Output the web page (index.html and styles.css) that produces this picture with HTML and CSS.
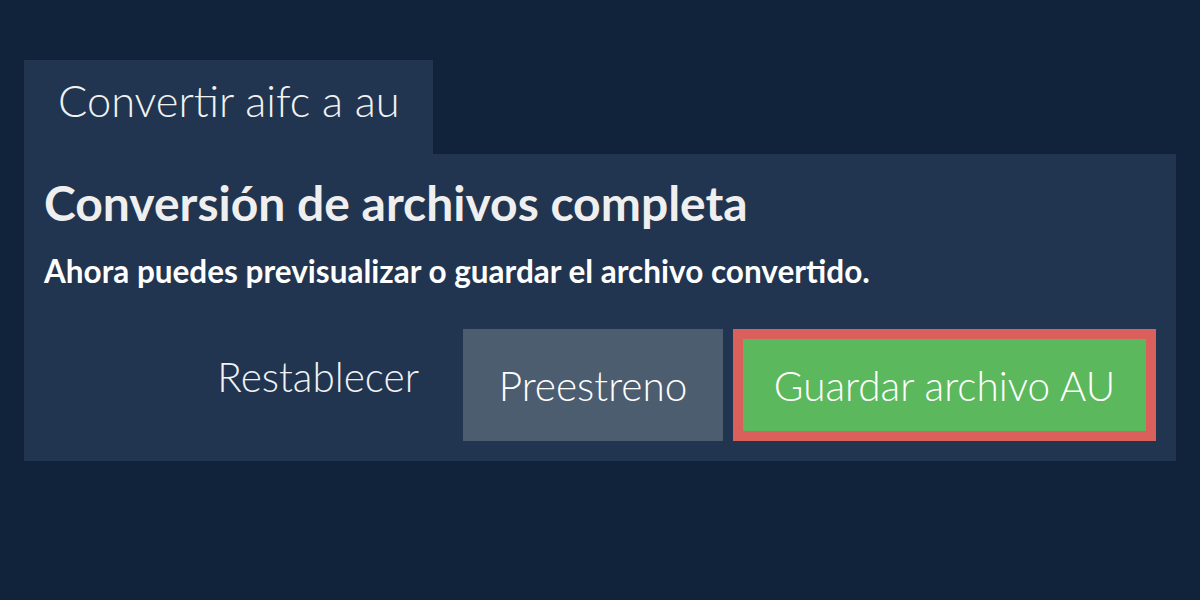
FILE: index.html
```html
<!DOCTYPE html>
<html lang="es">
<head>
<meta charset="utf-8">
<title>Convertir aifc a au</title>
<link rel="stylesheet" href="styles.css">
</head>
<body>
<div class="wrap">
  <div class="tab">Convertir aifc a au</div>
  <div class="panel">
    <h1 class="title">Conversión de archivos completa</h1>
    <p class="sub">Ahora puedes previsualizar o guardar el archivo convertido.</p>
    <div class="actions">
      <button class="btn btn-reset">Restablecer</button>
      <button class="btn btn-preview">Preestreno</button>
      <button class="btn btn-save">Guardar archivo AU</button>
    </div>
  </div>
</div>
</body>
</html>
```
FILE: styles.css
```css
html, body {
  margin: 0;
  padding: 0;
  background: #11233a;
  font-family: Lato, "Open Sans", sans-serif;
  color: #f2f2f2;
}
.wrap {
  padding: 60px 24px 0 24px;
}
.tab {
  display: inline-block;
  width: 409px;
  height: 94px;
  box-sizing: border-box;
  padding: 14px 0 0 34px;
  background: #213550;
  font-weight: 300;
  font-size: 43.4px;
  line-height: 52px;
  color: #f2f2f2;
  vertical-align: top;
}
.panel {
  background: #213550;
  padding: 20px 20px 20px 20px;
  height: 307px;
  box-sizing: border-box;
  display: flex;
  flex-direction: column;
}
.title {
  margin: 0;
  font-weight: 700;
  font-size: 48px;
  line-height: 58px;
  color: #efefef;
}
.sub {
  margin: 20px 0 0 0;
  font-weight: 700;
  font-size: 31.5px;
  line-height: 38px;
  color: #ffffff;
}
.actions {
  margin-top: auto;
  display: flex;
  justify-content: flex-end;
  align-items: stretch;
  gap: 10px;
}
.btn {
  font-family: Lato, "Open Sans", sans-serif;
  font-weight: 300;
  font-size: 40.5px;
  color: #ffffff;
  border: 0;
  height: 112px;
  box-sizing: border-box;
  cursor: pointer;
}
.btn-reset {
  background: transparent;
  padding: 0 34px 18px 34px;
  color: #f2f2f2;
}
.btn-preview {
  background: #4c5d6f;
  width: 260px;
  padding: 0;
}
.btn-save {
  background: #5cb85c;
  border: 10px solid #d9605b;
  width: 423px;
  padding: 0;
}
```
